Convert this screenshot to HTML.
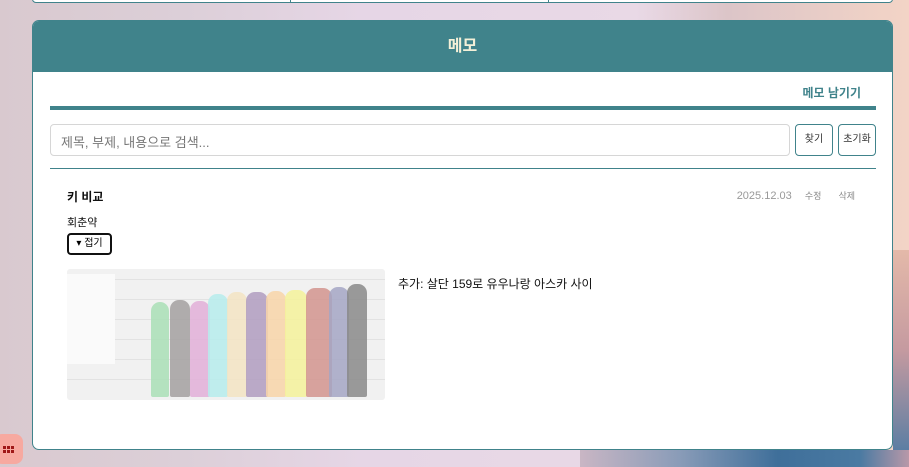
<!DOCTYPE html>
<html><head><meta charset="utf-8"><style>
*{box-sizing:border-box;margin:0;padding:0}
body{width:909px;height:467px;overflow:hidden;position:relative;font-family:"Liberation Sans","Noto Sans CJK KR",sans-serif;
background:linear-gradient(90deg,#d9c9cf 0%,#dccfd8 20%,#e6d6e6 40%,#e9d9e6 70%,#dcc5c8 80%,#f3d4c6 100%)}
.sea{position:absolute;left:580px;top:450px;width:329px;height:17px;background:linear-gradient(90deg,#c9b6c4,#8a9cb8 30%,#3f6f9a 60%,#4a7aa2 85%,#b898a8)}
.sea2{position:absolute;left:893px;top:250px;width:16px;height:200px;background:linear-gradient(#e4b9a9,#c59aa0,#5c7ea3)}
.top{position:absolute;left:32px;top:-10px;width:861px;height:13px;background:#fff;border:1px solid #40838b;border-radius:4px}
.top i{position:absolute;top:0;bottom:0;width:1px;background:#40838b}
.card{position:absolute;left:32px;top:20px;width:861px;height:430px;background:#fff;border:1px solid #40838b;border-radius:7px;overflow:hidden}
.hd{height:51px;background:#40838b;color:#f4f0d8;font-weight:bold;font-size:16px;text-align:center;line-height:52px}
.lnk{position:absolute;right:31px;top:63px;font-size:12px;color:#40838b;font-weight:bold}
.bar{position:absolute;left:17px;top:85px;width:826px;height:4px;background:#40838b}
.inp{position:absolute;left:17px;top:103px;width:740px;height:32px;border:1px solid #d6d6d6;border-radius:4px;font-size:13px;color:#777;padding:7px 10px}
.btn{position:absolute;top:103px;height:32px;border:1px solid #40838b;border-radius:4px;font-size:10px;color:#333;text-align:center;line-height:30px}
.hr{position:absolute;left:17px;top:147px;width:826px;height:1px;background:#40838b}
.t{position:absolute;left:34px;top:167px;font-size:12px;font-weight:bold;color:#111}
.meta{position:absolute;right:37px;top:168px;font-size:11px;color:#999}
.meta span{font-size:9px;margin-left:10px;color:#888}
.sub{position:absolute;left:34px;top:193px;font-size:11px;color:#111}
.fold{position:absolute;left:34px;top:212px;width:45px;height:22px;border:2px solid #111;border-radius:4px;font-size:10px;line-height:18px;text-align:center}
.img{position:absolute;left:34px;top:248px;width:318px;height:131px;background:#f1f1f1;border-radius:3px;overflow:hidden}
.img .ln{position:absolute;left:0;right:0;height:1px;background:#e2e2e2}
.img .p{position:absolute;bottom:3px;border-radius:9px 9px 2px 2px;opacity:.85}
.note{position:absolute;left:365px;top:254px;font-size:12px;color:#111}
.fab{position:absolute;left:-6px;top:434px;width:29px;height:30px;background:#f7a9a0;border-radius:8px}
.fab b{position:absolute;width:3px;height:3px;background:#a01818}
</style></head><body>
<div class="sea"></div><div class="sea2"></div>
<div class="top"><i style="left:257px"></i><i style="left:515px"></i></div>
<div class="card">
<div class="hd">메모</div>
<div class="lnk">메모 남기기</div>
<div class="bar"></div>
<div class="inp">제목, 부제, 내용으로 검색...</div>
<div class="btn" style="left:762px;width:38px">찾기</div>
<div class="btn" style="left:805px;width:38px">초기화</div>
<div class="hr"></div>
<div class="t">키 비교</div>
<div class="meta">2025.12.03 <span>수정</span> <span style="margin-left:14px">삭제</span></div>
<div class="sub">회춘약</div>
<div class="fold">▾ 접기</div>
<div class="img">
<div class="ln" style="top:10px"></div><div class="ln" style="top:30px"></div><div class="ln" style="top:50px"></div><div class="ln" style="top:70px"></div><div class="ln" style="top:90px"></div><div class="ln" style="top:110px"></div>
<div style="position:absolute;left:0;top:5px;width:48px;height:90px;background:#fafafa"></div>
<div class="p" style="left:84px;width:18px;height:95px;background:#a9dfb6"></div>
<div class="p" style="left:103px;width:20px;height:97px;background:#a3a0a0"></div>
<div class="p" style="left:123px;width:20px;height:96px;background:#e2afd8"></div>
<div class="p" style="left:141px;width:20px;height:103px;background:#b6ecec"></div>
<div class="p" style="left:160px;width:20px;height:105px;background:#f3e4c3"></div>
<div class="p" style="left:179px;width:22px;height:105px;background:#b09cc0"></div>
<div class="p" style="left:199px;width:20px;height:106px;background:#f8d5a8"></div>
<div class="p" style="left:218px;width:22px;height:107px;background:#f4f29a"></div>
<div class="p" style="left:239px;width:26px;height:109px;background:#d2948e"></div>
<div class="p" style="left:262px;width:20px;height:110px;background:#a4a6c4"></div>
<div class="p" style="left:280px;width:20px;height:113px;background:#8a8a8a"></div>
</div>
<div class="note">추가: 살단 159로 유우나랑 아스카 사이</div>
</div>
<div class="fab"><b style="left:9px;top:12px"></b><b style="left:13px;top:12px"></b><b style="left:17px;top:12px"></b><b style="left:9px;top:16px"></b><b style="left:13px;top:16px"></b><b style="left:17px;top:16px"></b></div>
</body></html>
